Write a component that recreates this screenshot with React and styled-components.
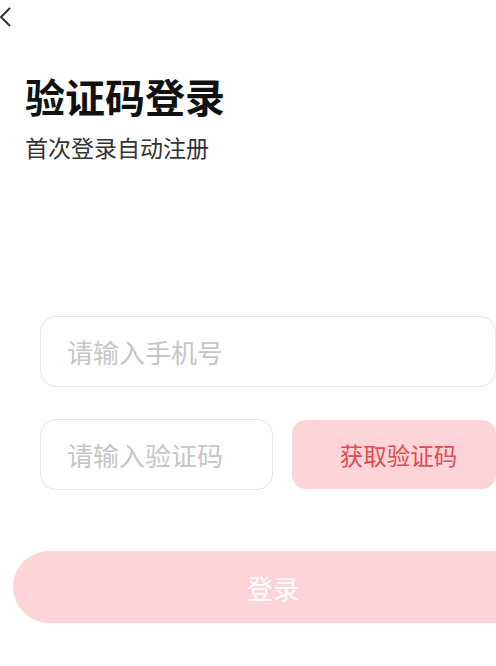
import styled, { createGlobalStyle } from 'styled-components'

const GlobalStyle = createGlobalStyle`
  html, body {
    margin: 0;
    padding: 0;
    background: #fff;
    overflow: hidden;
  }
  body {
    font-family: 'Noto Sans CJK SC', 'Noto Sans', sans-serif;
  }
`

const Page = styled.div`
  width: 496px;
  height: 666px;
  overflow: hidden;
  display: flex;
  flex-direction: column;
`

const BackButton = styled.button`
  display: flex;
  align-items: center;
  width: 24px;
  height: 22px;
  margin-top: 6px;
  padding: 0;
  border: none;
  background: none;
  cursor: pointer;
`

const Header = styled.header`
  display: flex;
  flex-direction: column;
  padding-left: 25px;
  margin-top: 44px;
`

const Title = styled.h1`
  margin: 0;
  font-size: 40px;
  line-height: 48px;
  font-weight: 600;
  color: #111;
`

const Subtitle = styled.p`
  margin: 14px 0 0;
  font-size: 23px;
  line-height: 27px;
  color: #333;
`

const Form = styled.form`
  display: flex;
  flex-direction: column;
  gap: 32px;
  margin-top: 155px;
  padding-left: 40px;
  width: 456px;
`

const Row = styled.div`
  display: flex;
  gap: 19px;
`

const Field = styled.input`
  box-sizing: border-box;
  width: ${(p) => p.$width || '100%'};
  height: 71px;
  padding: 0 26px;
  border: 1.5px solid #e6e6e6;
  border-radius: 16px;
  font-family: inherit;
  font-size: 26px;
  color: #333;
  outline: none;
  background: #fff;

  &::placeholder {
    color: #c6c6c6;
  }
`

const CodeButton = styled.button`
  flex: 1;
  height: 69px;
  margin-top: 1px;
  padding: 0 0 0 9px;
  border: none;
  border-radius: 14px;
  background: #fdd4d7;
  color: #e04a52;
  font-family: inherit;
  font-size: 23.5px;
`

const LoginButton = styled.button`
  width: 520px;
  height: 72px;
  margin: 61px 0 0 13px;
  padding: 0;
  border: none;
  border-radius: 36px;
  background: #fdd4d7;
  color: #fff;
  font-family: inherit;
  font-size: 26px;
  flex-shrink: 0;
`

export default function App() {
  return (
    <Page>
      <GlobalStyle />
      <BackButton aria-label='返回'>
        <svg width='12' height='20' viewBox='0 0 12 20' fill='none'>
          <polyline
            points='9.5,1.5 1,10 9.5,18.5'
            stroke='#333'
            strokeWidth='2'
            strokeLinecap='round'
            strokeLinejoin='round'
          />
        </svg>
      </BackButton>

      <Header>
        <Title>验证码登录</Title>
        <Subtitle>首次登录自动注册</Subtitle>
      </Header>

      <Form onSubmit={(e) => e.preventDefault()}>
        <Field placeholder='请输入手机号' />
        <Row>
          <Field $width='233px' placeholder='请输入验证码' />
          <CodeButton type='button'>获取验证码</CodeButton>
        </Row>
      </Form>

      <LoginButton>登录</LoginButton>
    </Page>
  )
}
